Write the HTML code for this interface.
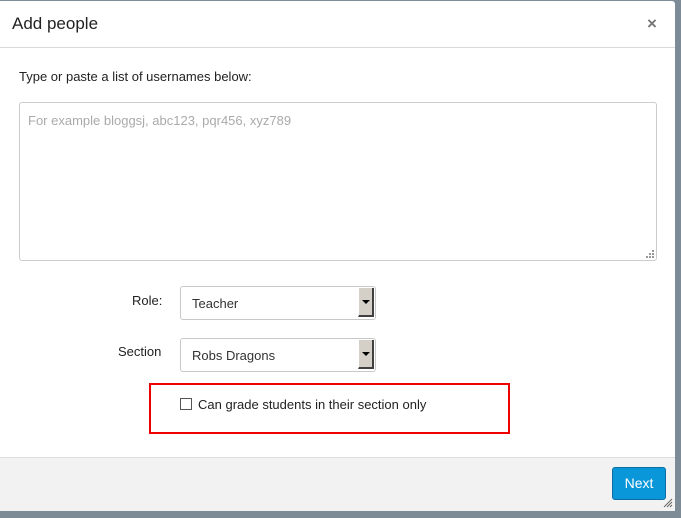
<!DOCTYPE html>
<html><head><style>
body{margin:0;width:681px;height:518px;background:#7d8b96;font-family:"Liberation Sans",sans-serif;position:relative;overflow:hidden}
.dlg{position:absolute;left:0;top:1px;width:675px;height:509px;background:#fff;border-radius:0 3px 3px 0}
.hdr{position:absolute;left:0;top:0;width:675px;height:46px;border-bottom:1px solid #d9d9d9}
.hdr .t{position:absolute;left:12px;top:13px;font-size:17px;color:#222}
.hdr .x{position:absolute;left:647px;top:13px;font-size:17px;font-weight:bold;color:#777}
.lbl{position:absolute;font-size:13px;color:#222}
.ta{position:absolute;left:19px;top:101px;width:636px;height:157px;border:1px solid #ccc;border-radius:3px}
.ta span{position:absolute;left:8px;top:10px;font-size:13px;color:#aaa}
.sel{position:absolute;left:180px;width:196px;height:34px;border:1px solid #c8c8c8;border-radius:3px;box-sizing:border-box}
.sel span{position:absolute;left:11px;top:9px;font-size:13px;color:#333}
.sel i{position:absolute;right:1px;top:1px;width:16px;height:29px;background:#d4d0c8;border-left:1px solid #fff;border-right:2px solid #404040;border-bottom:2px solid #404040;box-sizing:border-box}
.sel i:after{content:"";position:absolute;left:3px;top:12px;border-left:4px solid transparent;border-right:4px solid transparent;border-top:4px solid #000}
.red{position:absolute;left:149px;top:382px;width:357px;height:47px;border:2px solid #e00;box-sizing:content-box}
.cb{position:absolute;left:180px;top:398px;width:10px;height:10px;border:1px solid #555;background:#fff}
.ftr{position:absolute;left:0;top:456px;width:675px;height:53px;background:#f2f2f2;border-top:1px solid #ddd}
.btn{position:absolute;left:612px;top:467px;width:54px;height:33px;background:#0a97da;border:1px solid #0b6fa3;border-radius:3px;box-sizing:border-box;color:#fff;font-size:14px;text-align:center;line-height:31px}
</style></head><body>
<div class="dlg">
<div class="hdr"><div class="t">Add people</div><div class="x">×</div></div>
<div class="lbl" style="left:19px;top:68px">Type or paste a list of usernames below:</div>
<div class="ta"><span>For example bloggsj, abc123, pqr456, xyz789</span>
<svg style="position:absolute;right:1px;bottom:1px" width="10" height="10"><g fill="#999"><rect x="7" y="1" width="2" height="2"/><rect x="4" y="4" width="2" height="2"/><rect x="7" y="4" width="2" height="2"/><rect x="1" y="7" width="2" height="2"/><rect x="4" y="7" width="2" height="2"/><rect x="7" y="7" width="2" height="2"/></g></svg></div>
<div class="lbl" style="left:132px;top:292px">Role:</div>
<div class="sel" style="top:285px"><span>Teacher</span><i></i></div>
<div class="lbl" style="left:118px;top:343px">Section</div>
<div class="sel" style="top:337px"><span>Robs Dragons</span><i></i></div>
<div class="red"></div>
<div class="cb" style="top:397px"></div>
<div class="lbl" style="left:198px;top:396px">Can grade students in their section only</div>
<div class="ftr"></div>
<div class="btn" style="top:466px">Next</div>
<svg style="position:absolute;left:663px;top:497px" width="10" height="10"><path d="M9 1L1 9M9 4L4 9M9 7L7 9" stroke="#666" stroke-width="1"/></svg>
</div>
</body></html>
